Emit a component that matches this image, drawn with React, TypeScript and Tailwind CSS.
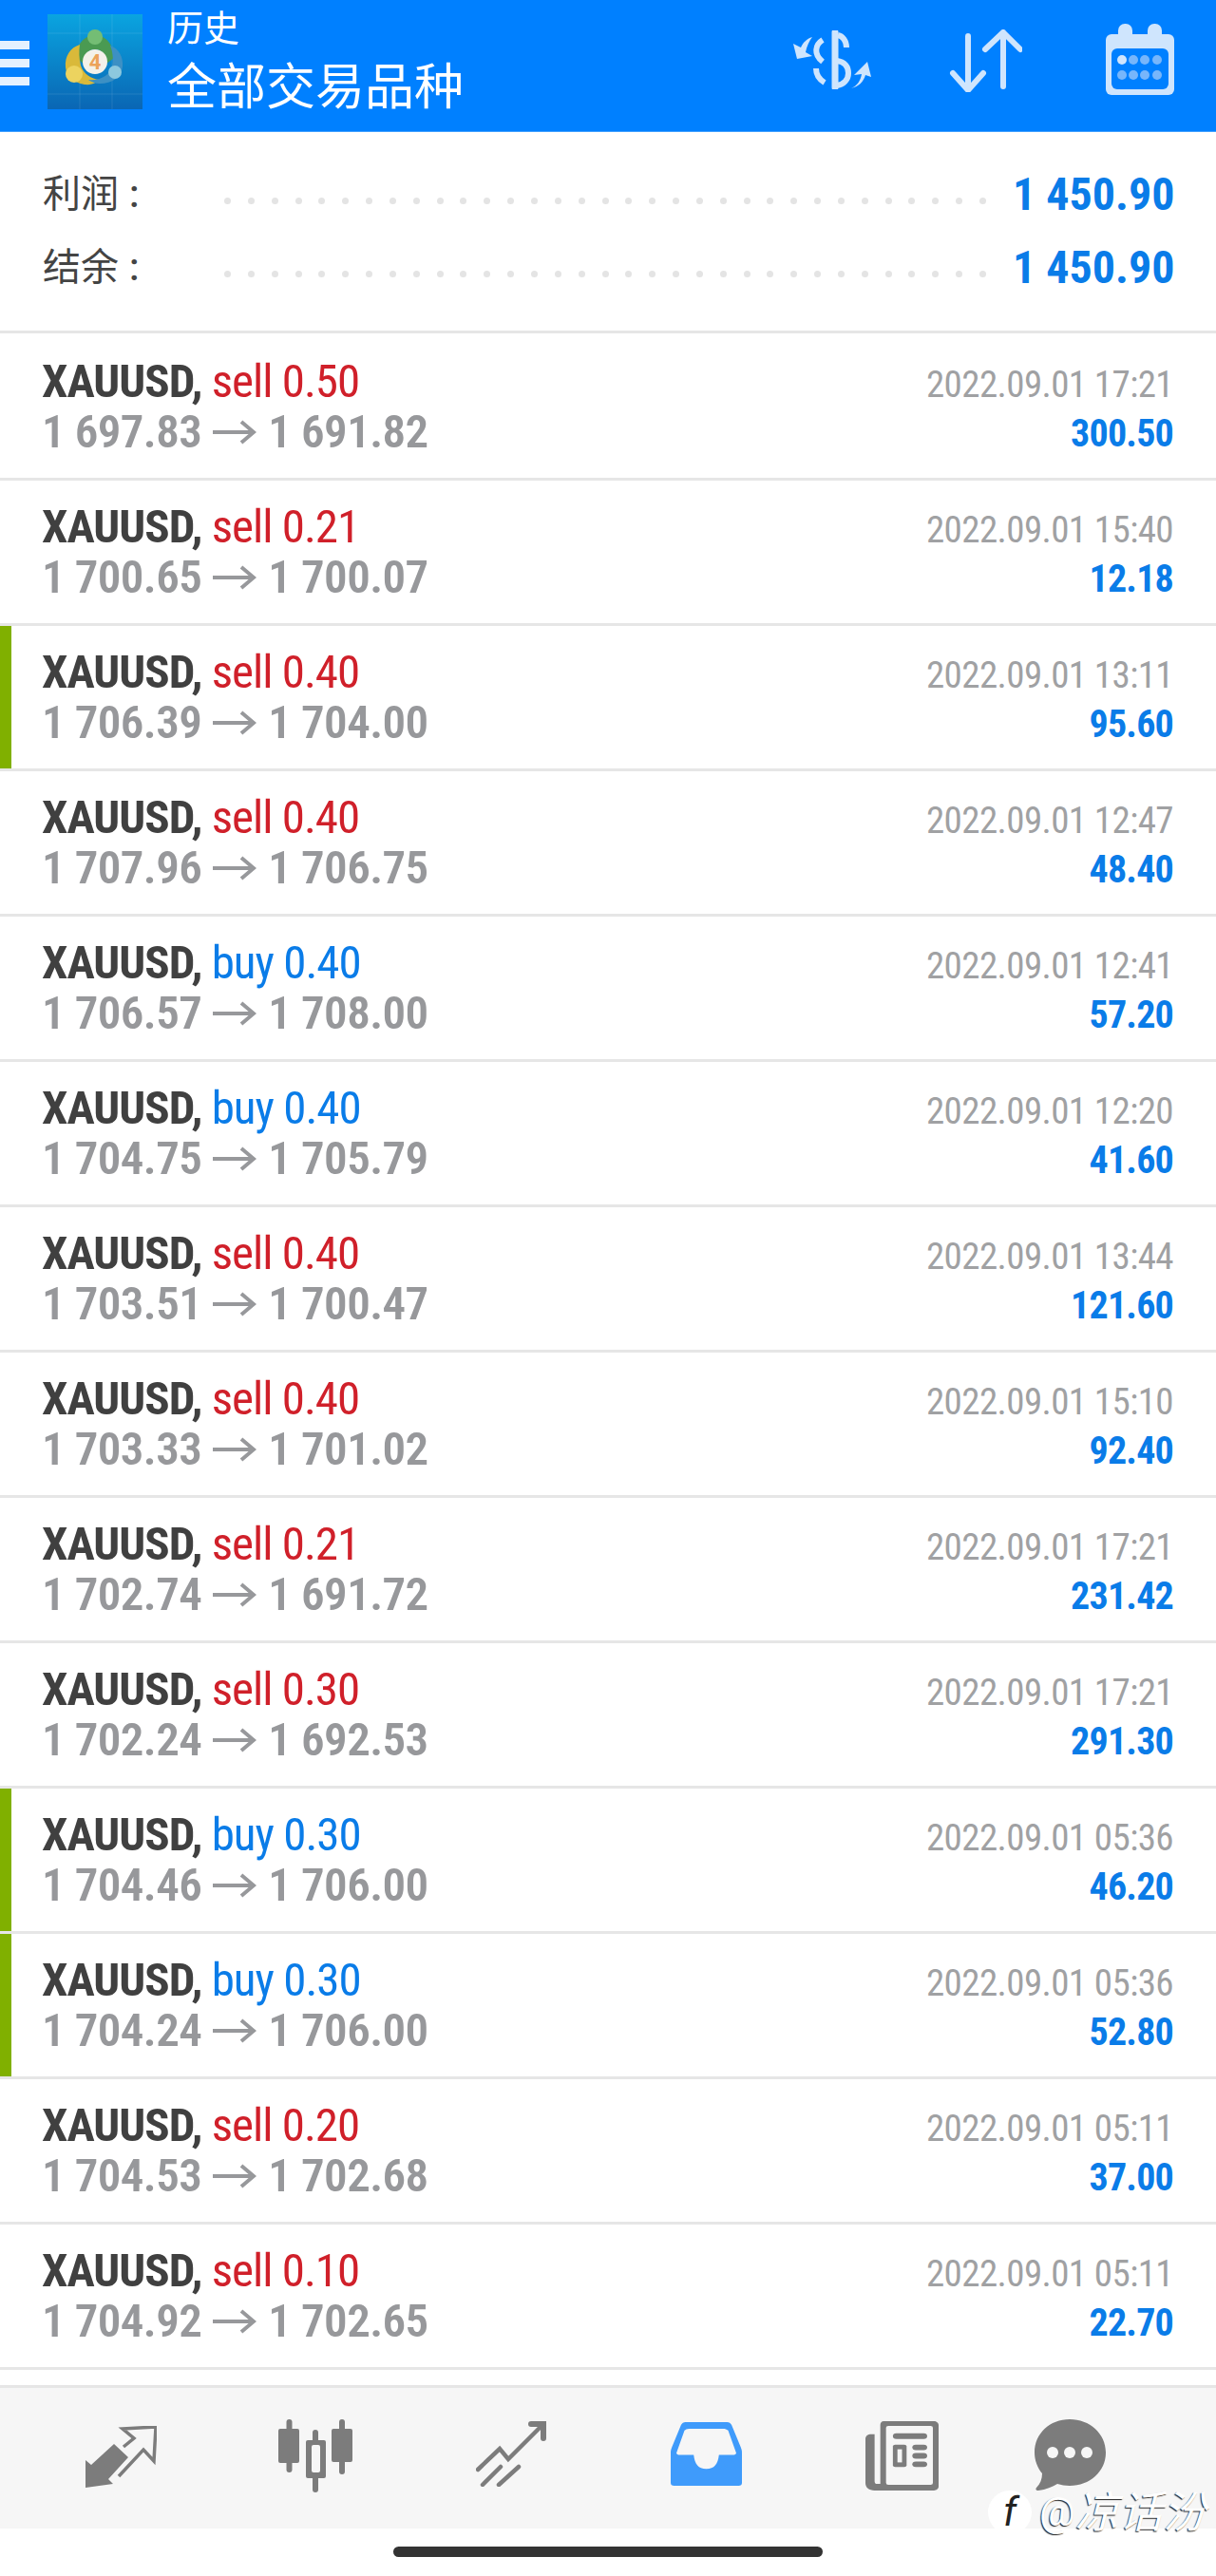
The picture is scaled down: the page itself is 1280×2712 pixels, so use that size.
const sans = "font-['Roboto','Noto_Sans_CJK_SC',sans-serif]";

type Trade = {
  side: "sell" | "buy";
  lot: string;
  open: string;
  close: string;
  time: string;
  profit: string;
  marked?: boolean;
};

const trades: Trade[] = [
  { side: "sell", lot: "0.50", open: "1 697.83", close: "1 691.82", time: "2022.09.01 17:21", profit: "300.50" },
  { side: "sell", lot: "0.21", open: "1 700.65", close: "1 700.07", time: "2022.09.01 15:40", profit: "12.18" },
  { side: "sell", lot: "0.40", open: "1 706.39", close: "1 704.00", time: "2022.09.01 13:11", profit: "95.60", marked: true },
  { side: "sell", lot: "0.40", open: "1 707.96", close: "1 706.75", time: "2022.09.01 12:47", profit: "48.40" },
  { side: "buy", lot: "0.40", open: "1 706.57", close: "1 708.00", time: "2022.09.01 12:41", profit: "57.20" },
  { side: "buy", lot: "0.40", open: "1 704.75", close: "1 705.79", time: "2022.09.01 12:20", profit: "41.60" },
  { side: "sell", lot: "0.40", open: "1 703.51", close: "1 700.47", time: "2022.09.01 13:44", profit: "121.60" },
  { side: "sell", lot: "0.40", open: "1 703.33", close: "1 701.02", time: "2022.09.01 15:10", profit: "92.40" },
  { side: "sell", lot: "0.21", open: "1 702.74", close: "1 691.72", time: "2022.09.01 17:21", profit: "231.42" },
  { side: "sell", lot: "0.30", open: "1 702.24", close: "1 692.53", time: "2022.09.01 17:21", profit: "291.30" },
  { side: "buy", lot: "0.30", open: "1 704.46", close: "1 706.00", time: "2022.09.01 05:36", profit: "46.20", marked: true },
  { side: "buy", lot: "0.30", open: "1 704.24", close: "1 706.00", time: "2022.09.01 05:36", profit: "52.80", marked: true },
  { side: "sell", lot: "0.20", open: "1 704.53", close: "1 702.68", time: "2022.09.01 05:11", profit: "37.00" },
  { side: "sell", lot: "0.10", open: "1 704.92", close: "1 702.65", time: "2022.09.01 05:11", profit: "22.70" },
];

function Logo() {
  return (
    <svg viewBox="0 0 100 100" className="w-[100px] h-[100px] shrink-0">
      <defs>
        <linearGradient id="logoBg" x1="0" y1="0" x2="0" y2="1">
          <stop offset="0" stopColor="#0aa4e0" />
          <stop offset="1" stopColor="#0a66b4" />
        </linearGradient>
      </defs>
      <rect width="100" height="100" fill="url(#logoBg)" />
      <path d="M34 0v100M68 0v100M0 84h100M0 20h100" stroke="#ffffff" strokeOpacity="0.1" />
      {/* green figure */}
      <path d="M50 22c-12 0-20 11-20 24l8 6c0-9 5-15 12-15s12 6 12 15l8-6c0-13-8-24-20-24z" fill="#4a9a52" />
      <circle cx="50" cy="24" r="8" fill="#74bd74" />
      {/* yellow figure */}
      <path d="M34 32c-10 3-16 12-15 24 1 9 8 16 20 18 9 1 13-3 16-5-9-1-17-6-20-15-2-8-2-15-1-22z" fill="#d9b93a" />
      <circle cx="28" cy="63" r="9" fill="#ecd35f" />
      {/* blue figure */}
      <path d="M66 33c9 3 14 12 13 22-1 11-11 18-24 18-5 0-9-2-12-4 10 1 20-3 24-11 3-8 2-18-1-25z" fill="#3c90c4" />
      <circle cx="71" cy="61" r="7" fill="#8cc8de" />
      <circle cx="50" cy="50" r="13" fill="#f3f1ea" />
      <text x="50" y="58" textAnchor="middle" fontSize="22" fontWeight="700" fill="#eca35a" fontFamily="Roboto, sans-serif">4</text>
    </svg>
  );
}

function Topbar() {
  const icon = "#cfe5fd";
  return (
    <header className="h-[139px] bg-[#0080ff] border-b border-[#3f9fff] flex items-start shrink-0">
      <div className="w-[31px] mt-[43px] flex flex-col gap-[10px] shrink-0">
        <div className="h-[9px] bg-[#e4f1ff]" />
        <div className="h-[9px] bg-[#e4f1ff]" />
        <div className="h-[9px] bg-[#e4f1ff]" />
      </div>
      <div className="ml-[19px] mt-[15px]"><Logo /></div>
      <div className="ml-[26px] mt-[7px] text-white">
        <div className="text-[38px] leading-[46px]">历史</div>
        <div className="text-[52px] leading-[64px] mt-[8px]">全部交易品种</div>
      </div>
      <div className="ml-auto flex items-start">
        <svg viewBox="0 0 82 62" className="w-[82px] h-[62px] mt-[32px] fill-none" stroke={icon} strokeWidth="6">
          <path d="M44 2v58" strokeWidth="7" strokeLinecap="round" />
          <path d="M47 5c5 1 9 6 9 13" />
          <path d="M31 10c-8 5-10 15 0 23" />
          <path d="M46 32c8 1 12 6 12 13s-5 12-12 13" />
          <path d="M24 40c0 7 4 12 9 15" />
          <path d="M20 7C14 9 10 13 8 18L0 14 4 30 20 27 13 23C14 17 17 11 20 7z" fill={icon} stroke="none" />
          <path d="M61 61c7-3 10-9 11-15l-8 1L78 33l4 16-6-2c-2 7-7 12-15 14z" fill={icon} stroke="none" />
        </svg>
        <svg viewBox="0 0 77 66" className="w-[77px] h-[66px] mt-[31px] ml-[82px] fill-none" stroke={icon} strokeWidth="6" strokeLinecap="round" strokeLinejoin="round">
          <path d="M20 7v56M4 46l16 18 16-18" />
          <path d="M57 60V3M38 21L57 3l18 18" />
        </svg>
        <svg viewBox="0 0 72 75" className="w-[72px] h-[75px] mt-[25px] ml-[88px] mr-[44px]">
          <rect x="0" y="11" width="72" height="64" rx="6" fill={icon} />
          <rect x="13" y="0" width="15" height="18" rx="7" fill={icon} />
          <rect x="44" y="0" width="15" height="18" rx="7" fill={icon} />
          <rect x="6" y="26" width="60" height="43" rx="6" fill="#0080ff" />
          {[17, 29, 41, 54].map((x, i) => (
            <g key={x}>
              <circle cx={x} cy="38" r="5" fill={i === 0 ? icon : "#77b6fb"} />
              <circle cx={x} cy="54" r="5" fill="#77b6fb" />
            </g>
          ))}
        </svg>
      </div>
    </header>
  );
}

function SummaryRow({ label, value }: { label: string; value: string }) {
  return (
    <div className="flex items-center h-[77px]">
      <div className="w-[190px] pl-[45px] text-[40px] text-[#444444] shrink-0 leading-none">
        {label}<span className="ml-[11px] font-medium">:</span>
      </div>
      <div className="flex-1 flex justify-between mt-[13px] ml-[46px] mr-[28px]">
        {Array.from({ length: 33 }).map((_, i) => (
          <span key={i} className="w-[7px] h-[7px] rounded-full bg-[#e4e4e4]" />
        ))}
      </div>
      <div className="w-[214px] pr-[45px] text-right text-[48px] font-bold font-stretch-condensed text-[#0a7ce8] whitespace-nowrap shrink-0 leading-none">{value}</div>
    </div>
  );
}

function TradeRow({ trade, first }: { trade: Trade; first: boolean }) {
  return (
    <div className={`relative border-t-[3px] border-[#e6e6e6] flex justify-between pl-[44px] pr-[45px] ${first ? "h-[155px] pt-[24px]" : "h-[153px] pt-[22px]"}`}>
      {trade.marked && <div className="absolute left-0 top-0 bottom-0 w-[12px] bg-[#80b000]" />}
      <div className="font-stretch-condensed">
        <div className="text-[49px] leading-[54px] whitespace-nowrap tracking-[-1px]">
          <span className="font-bold text-[#404040]">XAUUSD,</span>{" "}
          <span className={trade.side === "sell" ? "text-[#d0202a]" : "text-[#0a7ce8]"}>{trade.side} {trade.lot}</span>
        </div>
        <div className="text-[49px] leading-[52px] font-semibold text-[#97989b] whitespace-nowrap flex items-center tracking-[-0.6px]">
          {trade.open}
          <svg viewBox="0 0 46 26" className="w-[46px] h-[26px] mx-[12px] fill-none" stroke="#97989b" strokeWidth="4">
            <path d="M0 13h43M30 2l13 11-13 11" />
          </svg>
          {trade.close}
        </div>
      </div>
      <div className="text-right font-stretch-condensed">
        <div className="text-[39px] leading-[46px] mt-[7px] text-[#a0a1a3] whitespace-nowrap tracking-[-0.6px]">{trade.time}</div>
        <div className="text-[40px] leading-[46px] mt-[6px] font-bold text-[#0a7ce8] tracking-[-0.8px]">{trade.profit}</div>
      </div>
    </div>
  );
}

function BottomNav() {
  const gray = "#7c7c7c";
  const bg = "#f6f6f6";
  return (
    <nav className="h-[151px] bg-[#f6f6f6] border-t-[3px] border-[#e6e6e6] mt-[16px] relative">
      <svg viewBox="0 0 75 65" className="absolute left-[90px] top-[40px] w-[75px] h-[65px] fill-none">
        <path d="M30 19L45 33 24 56 29 61 0 65 0 36 6 41z" fill={gray} />
        <path d="M40 22L51 13 39 3 74 1 72 37 61 25 35 53" stroke={gray} strokeWidth="3.5" />
      </svg>
      <svg viewBox="0 0 78 77" className="absolute left-[293px] top-[33px] w-[78px] h-[77px]">
        <rect x="8.5" y="0" width="6" height="56" rx="3" fill={gray} />
        <rect x="0" y="10" width="22" height="36" rx="2" fill={gray} />
        <rect x="36" y="11" width="6" height="66" rx="3" fill={gray} />
        <rect x="29" y="22" width="21" height="40" rx="2" fill={gray} />
        <rect x="35" y="27" width="9" height="29" rx="2" fill={bg} />
        <rect x="64" y="0" width="6" height="58" rx="3" fill={gray} />
        <rect x="56" y="10" width="22" height="35" rx="2" fill={gray} />
      </svg>
      <svg viewBox="0 0 74 69" className="absolute left-[501px] top-[35px] w-[74px] h-[69px] fill-none" stroke={gray} strokeWidth="4.5" strokeLinecap="round">
        <path d="M2 51L25 29 34 40 68 6" />
        <path d="M58 3h13v15" strokeWidth="6" />
        <path d="M7 67L26 48M24 67L45 48" />
      </svg>
      <svg viewBox="0 0 62 70" preserveAspectRatio="none" className="absolute left-[706px] top-[35px] w-[75px] h-[69px]">
        <path d="M13 1h36c2 0 3 1 4 3l8 24c1 3 1 4 1 7v31c0 2-1 3-3 3H3c-2 0-3-1-3-3V35c0-3 0-4 1-7L9 4c1-2 2-3 4-3z" fill="#3f9bfb" />
        <path d="M16 8h30c2 0 3 1 4 2l7 24c0 1-1 2-2 2H42c-1 10-4 15-11 15s-10-5-11-15H7c-1 0-2-1-2-2l7-24c1-1 2-2 4-2z" fill={bg} />
      </svg>
      <svg viewBox="0 0 64 76" preserveAspectRatio="none" className="absolute left-[911px] top-[33px] w-[77px] h-[75px]">
        <path d="M13 2h47c2 0 4 2 4 4v66c0 2-2 4-4 4H8c-5 0-8-3-8-8V21c0-3 2-5 5-5h3v50c0 2 1 3 2 3h3V6c0-2 1-4 3-4z" fill={gray} />
        <rect x="18" y="7" width="41" height="63" rx="2" fill={bg} />
        <rect x="24" y="15" width="30" height="6" rx="3" fill={gray} />
        <rect x="24" y="27" width="12" height="24" rx="2" fill={gray} />
        <rect x="28" y="32" width="4" height="14" fill={bg} />
        <rect x="41" y="27" width="13" height="6" rx="3" fill={gray} />
        <rect x="41" y="36" width="13" height="6" rx="3" fill={gray} />
        <rect x="41" y="45" width="13" height="6" rx="3" fill={gray} />
      </svg>
      <svg viewBox="0 0 75 75" className="absolute left-[1089px] top-[33px] w-[75px] h-[75px]">
        <path d="M37 0c21 0 38 15 38 35S58 70 37 70c-5 0-9-1-13-2-5 3-12 6-20 7-3 0-3-2-2-3 4-4 6-9 6-15C3 51 0 43 0 35 0 15 16 0 37 0z" fill={gray} />
        <circle cx="19" cy="35" r="6" fill={bg} />
        <circle cx="37" cy="35" r="6" fill={bg} />
        <circle cx="55" cy="35" r="6" fill={bg} />
      </svg>
      {/* watermark */}
      <div className="absolute left-[1040px] top-[108px] flex items-center text-[46px] leading-none text-white whitespace-nowrap [text-shadow:-1px_1px_1px_#222]">
        <span className="w-[46px] h-[46px] rounded-full bg-white text-[#222] text-[42px] italic flex items-center justify-center mr-[8px] [text-shadow:none]">f</span>
        <span className="text-[42px]">@</span>
        <span className="italic">凉话汾</span>
      </div>
    </nav>
  );
}

export default function App() {
  return (
    <div className={`w-[1280px] h-[2712px] bg-white flex flex-col overflow-hidden ${sans}`}>
      <Topbar />
      <section className="pt-[27px] pb-[28px]">
        <SummaryRow label="利润" value="1 450.90" />
        <SummaryRow label="结余" value="1 450.90" />
      </section>
      <div>
        {trades.map((trade, i) => (
          <TradeRow key={i} trade={trade} first={i === 0} />
        ))}
      </div>
      <div className="border-t-[3px] border-[#e6e6e6]" />
      <BottomNav />
      <div className="flex-1 flex justify-center pt-[19px]">
        <div className="w-[452px] h-[11px] rounded-full bg-[#333333]" />
      </div>
    </div>
  );
}
